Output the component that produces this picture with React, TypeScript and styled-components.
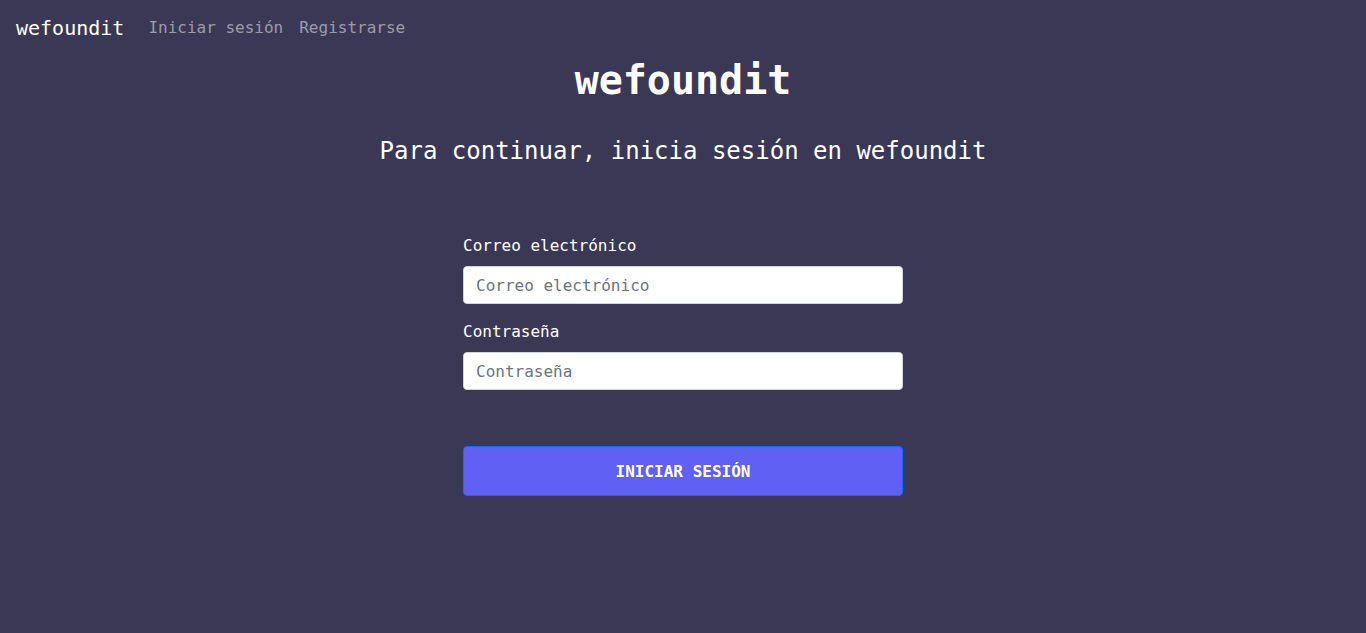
import React from "react";
import styled, { createGlobalStyle } from "styled-components";

const Global = createGlobalStyle`
  html, body { margin: 0; padding: 0; background: #3a3854; }
  body { font-family: "DejaVu Sans Mono", monospace; color: #fff; min-height: 633px; }
  * { box-sizing: border-box; }
`;

const Page = styled.div`
  min-height: 633px;
  background: #3a3854;
`;

const Navbar = styled.nav`
  display: flex;
  align-items: center;
  height: 56px;
  padding: 8px 16px;
`;

const Brand = styled.a`
  font-size: 20px;
  line-height: 30px;
  color: #fff;
  text-decoration: none;
  margin-right: 16px;
`;

const NavLink = styled.a`
  font-size: 16px;
  line-height: 24px;
  padding: 8px;
  color: rgba(255, 255, 255, 0.5);
  text-decoration: none;
`;

const Main = styled.main`
  display: flex;
  flex-direction: column;
  align-items: center;
`;

const Title = styled.h1`
  margin: 0;
  font-size: 40px;
  line-height: 48px;
  font-weight: 700;
`;

const Subtitle = styled.h2`
  margin: 33px 0 0;
  font-size: 24px;
  line-height: 29px;
  font-weight: 400;
`;

const Form = styled.form`
  width: 440px;
  margin-top: 68px;
  display: flex;
  flex-direction: column;
`;

const Field = styled.div`
  display: flex;
  flex-direction: column;
  margin-bottom: 16px;
`;

const Label = styled.label`
  font-size: 16px;
  line-height: 24px;
  margin-bottom: 8px;
`;

const Input = styled.input`
  height: 38px;
  padding: 6px 12px;
  font-family: "DejaVu Sans Mono", monospace;
  font-size: 16px;
  color: #212529;
  background: #fff;
  border: 1px solid #ced4da;
  border-radius: 4px;
  outline: none;
  &::placeholder { color: #6c757d; }
`;

const Button = styled.button`
  margin-top: 40px;
  height: 50px;
  background: #6060f4;
  border: 1px solid #0d6efd;
  border-radius: 4px;
  color: #fff;
  font-family: "DejaVu Sans Mono", monospace;
  font-size: 16px;
  font-weight: 700;
  text-transform: uppercase;
  cursor: pointer;
`;

export default function App() {
  return (
    <Page>
      <Global />
      <Navbar>
        <Brand href="#">wefoundit</Brand>
        <NavLink href="#">Iniciar sesión</NavLink>
        <NavLink href="#">Registrarse</NavLink>
      </Navbar>
      <Main>
        <Title>wefoundit</Title>
        <Subtitle>Para continuar, inicia sesión en wefoundit</Subtitle>
        <Form onSubmit={(e) => e.preventDefault()}>
          <Field>
            <Label>Correo electrónico</Label>
            <Input type="email" placeholder="Correo electrónico" />
          </Field>
          <Field>
            <Label>Contraseña</Label>
            <Input type="password" placeholder="Contraseña" />
          </Field>
          <Button type="submit">Iniciar sesión</Button>
        </Form>
      </Main>
    </Page>
  );
}
